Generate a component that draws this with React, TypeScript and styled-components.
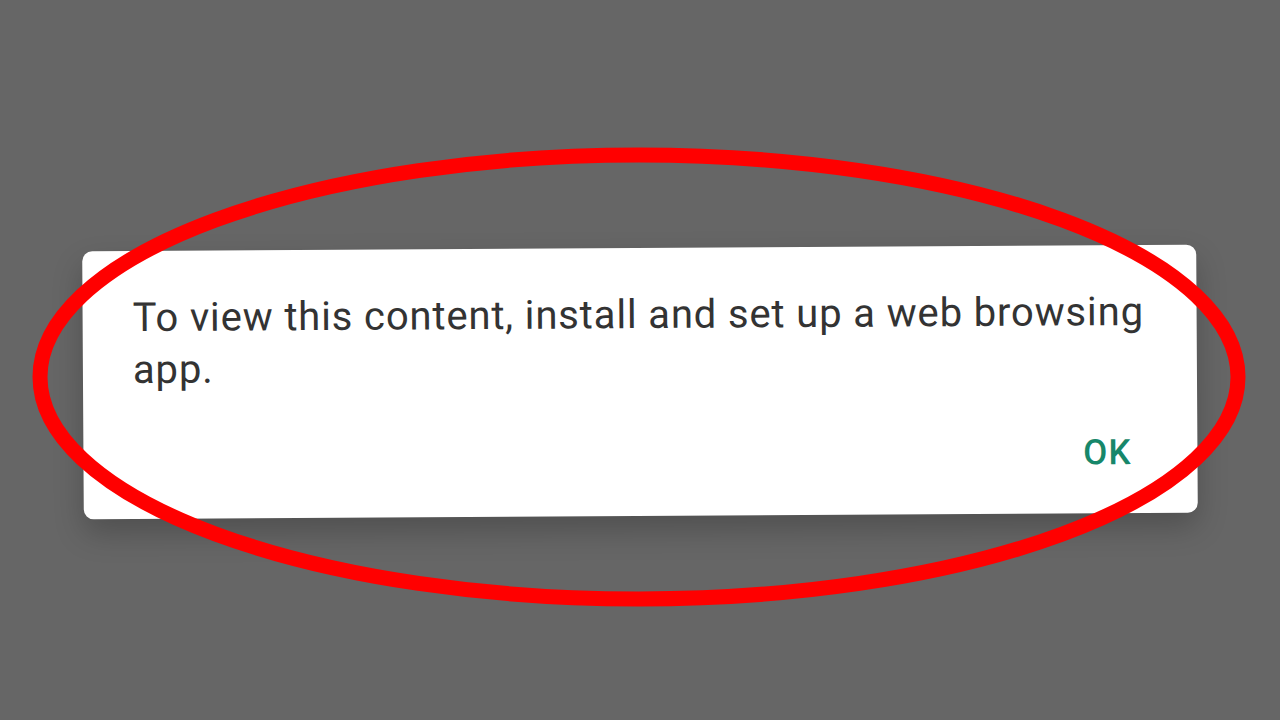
import React from "react";
import styled, { createGlobalStyle } from "styled-components";

const Global = createGlobalStyle`
  html, body { margin: 0; padding: 0; background: #666666; }
  body { font-family: Roboto, "Noto Sans", "Liberation Sans", sans-serif; overflow: hidden; }
`;

const Stage = styled.div`
  position: relative;
  width: 1280px;
  height: 720px;
  display: flex;
  align-items: center;
  justify-content: center;
  padding-top: 44px;
  box-sizing: border-box;
`;

const Dialog = styled.div`
  width: 1114px;
  height: 268px;
  box-sizing: border-box;
  background: #ffffff;
  border-radius: 10px;
  padding: 41px 30px 0 50px;
  display: flex;
  flex-direction: column;
  transform: rotate(-0.35deg);
  box-shadow: 0 14px 30px rgba(0, 0, 0, 0.22);
`;

const Message = styled.p`
  margin: 0;
  font-size: 40px;
  line-height: 52px;
  color: #333333;
  letter-spacing: 0.85px;
`;

const Actions = styled.div`
  display: flex;
  justify-content: flex-end;
  margin-top: 43px;
  padding-right: 36px;
`;

const Button = styled.span`
  font-size: 35px;
  font-weight: 500;
  line-height: 40px;
  letter-spacing: 1px;
  color: #17876a;
`;

const Overlay = styled.svg`
  position: absolute;
  left: 0;
  top: 0;
  pointer-events: none;
`;

export default function App() {
  return (
    <>
      <Global />
      <Stage>
        <Dialog>
          <Message>
            To view this content, install and set up a web browsing app.
          </Message>
          <Actions>
            <Button>OK</Button>
          </Actions>
        </Dialog>
        <Overlay width="1280" height="720" viewBox="0 0 1280 720">
          <ellipse
            cx="639"
            cy="377"
            rx="599"
            ry="222"
            fill="none"
            stroke="#ff0000"
            strokeWidth="15"
          />
        </Overlay>
      </Stage>
    </>
  );
}
